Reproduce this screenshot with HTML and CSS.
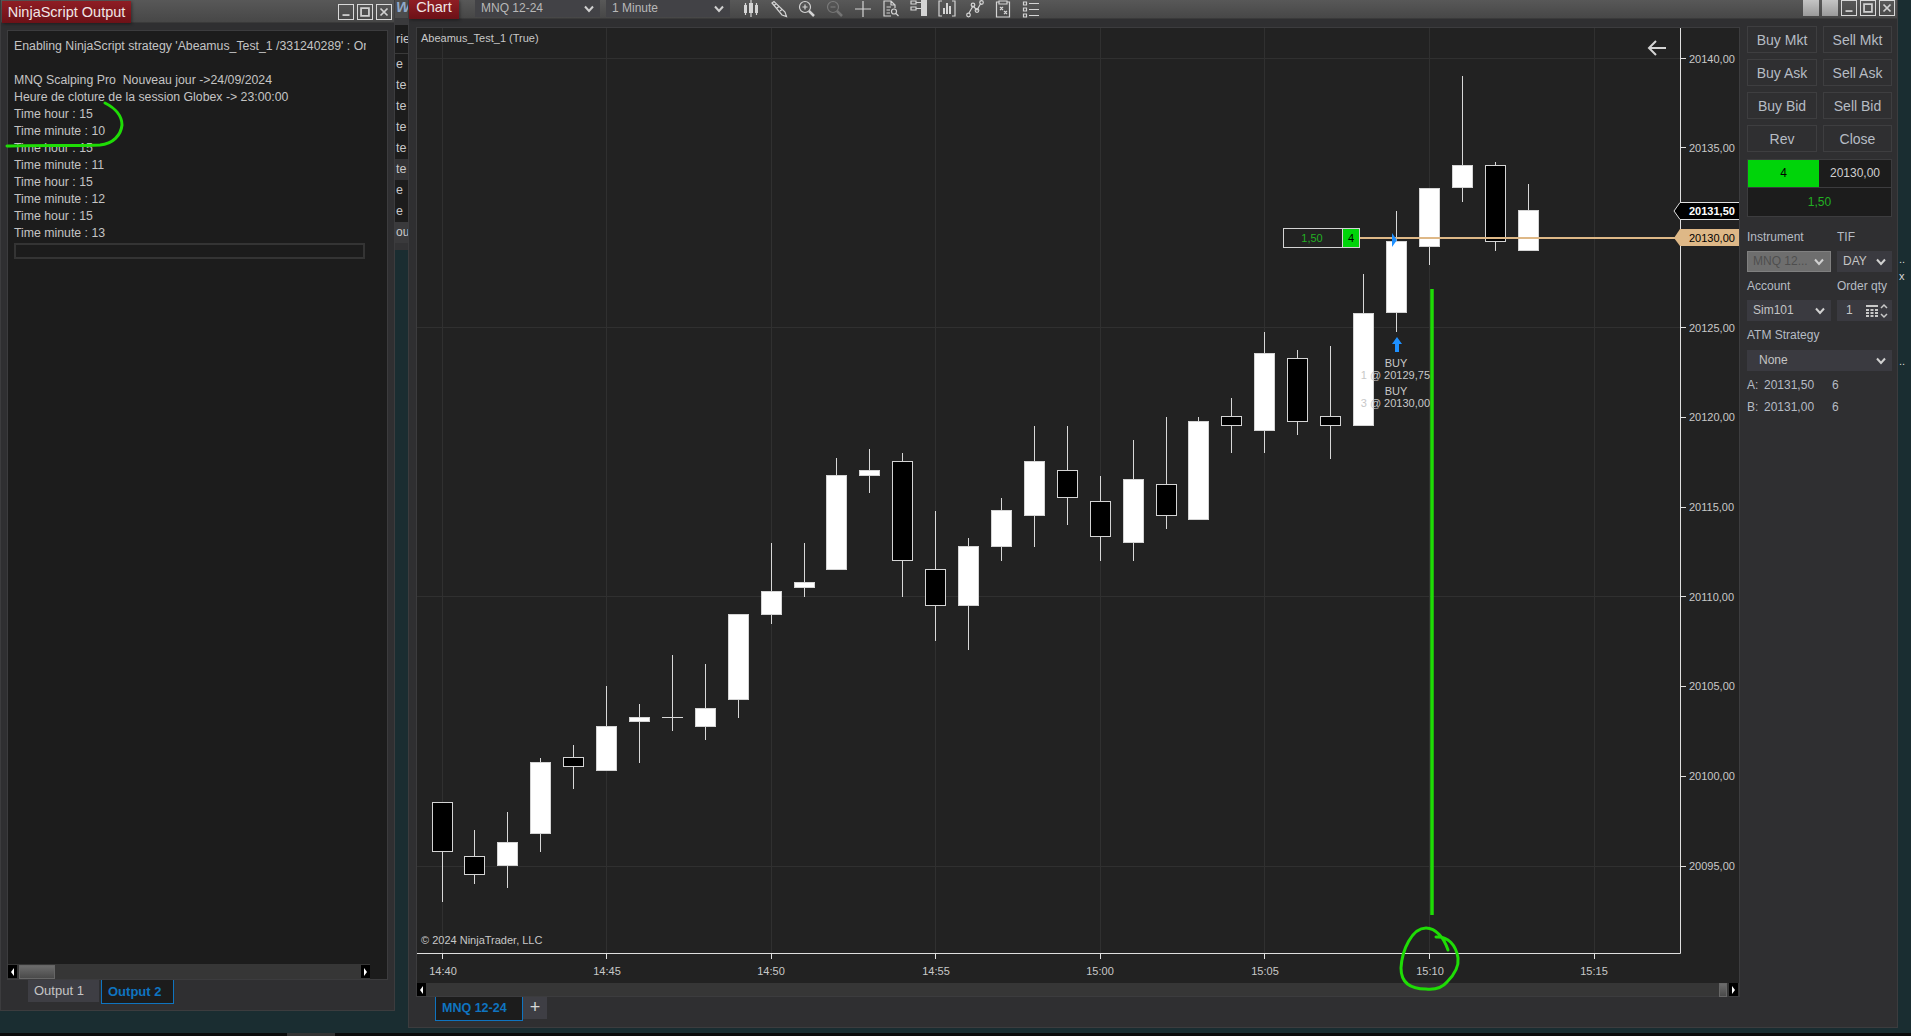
FILE: index.html
```html
<!DOCTYPE html>
<html lang="en">
<head>
    <meta charset="UTF-8">
    <title>NinjaTrader</title>
    <link rel="stylesheet" href="styles.css">
</head>
<body>
    <!-- Output window -->
    <section class="window output-window">
        <header class="titlebar">
            <div class="title-tab">NinjaScript Output</div>
            <div class="win-buttons">
                <span class="win-btn"><svg viewBox="0 0 16 16"><path d="M4 11.5H12" /></svg></span>
                <span class="win-btn"><svg viewBox="0 0 16 16"><path d="M3.5 3.5H12.5V12.5H3.5Z" /></svg></span>
                <span class="win-btn"><svg viewBox="0 0 16 16"><path d="M4 4L12 12M12 4L4 12" /></svg></span>
            </div>
        </header>
        <div class="output-body">
            <div class="output-panel">
                <div class="output-text">
                    <div class="line">Enabling NinjaScript strategy 'Abeamus_Test_1 /331240289' : On starting</div>
                    <div class="line">&nbsp;</div>
                    <div class="line">MNQ Scalping Pro&nbsp; Nouveau jour -&gt;24/09/2024</div>
                    <div class="line">Heure de cloture de la session Globex -&gt; 23:00:00</div>
                    <div class="line">Time hour : 15</div>
                    <div class="line">Time minute : 10</div>
                    <div class="line">Time hour : 15</div>
                    <div class="line">Time minute : 11</div>
                    <div class="line">Time hour : 15</div>
                    <div class="line">Time minute : 12</div>
                    <div class="line">Time hour : 15</div>
                    <div class="line">Time minute : 13</div>
                    <div class="output-input"></div>
                </div>
                <div class="scrollbar output-scroll">
                    <span class="scroll-arrow left"></span>
                    <span class="scroll-thumb wide"></span>
                    <span class="scroll-arrow right"></span>
                </div>
            </div>
            <div class="tabs output-tabs">
                <div class="tab">Output 1</div>
                <div class="tab active">Output 2</div>
            </div>
        </div>
    </section>

    <!-- Window behind, only a strip shows -->
    <section class="window behind-window">
        <div class="behind-title">W</div>
        <div class="behind-row head">rie</div>
        <div class="behind-row">e</div>
        <div class="behind-row">te</div>
        <div class="behind-row">te</div>
        <div class="behind-row">te</div>
        <div class="behind-row">te</div>
        <div class="behind-row selected">te</div>
        <div class="behind-row">e</div>
        <div class="behind-row">e</div>
        <div class="behind-row foot">ou</div>
    </section>

    <!-- Chart window -->
    <section class="window chart-window">
        <header class="titlebar chart-titlebar">
            <div class="title-tab chart-tab">Chart</div>
            <div class="tool-select first">MNQ 12-24<svg class="chevron" viewBox="0 0 10 8"><path d="M1 1.5L5 6L9 1.5" /></svg></div>
            <div class="tool-select second">1 Minute<svg class="chevron" viewBox="0 0 10 8"><path d="M1 1.5L5 6L9 1.5" /></svg></div>
            <div class="tool-icons">
                <svg viewBox="0 0 18 18"><path class="solid" d="M2 5H5V13H2ZM7 3H11V13H7ZM13 5H16V13H13Z" /><path d="M3.5 3V15M9 0V17M14.5 3V15" /></svg>
                <svg viewBox="0 0 18 18"><path d="M2 3L4 1.5L15 12L16.5 16.5L12 15Z M4.5 5L6.5 3.5M7 8L9 6.5M10 11L12 9.5" /></svg>
                <svg viewBox="0 0 18 18"><circle cx="7" cy="7" r="5.5" /><path d="M4.5 7H9.5M7 4.5V9.5" /><path class="thick" d="M11 11L16 16" /></svg>
                <svg class="dim" viewBox="0 0 18 18"><circle cx="7" cy="7" r="5.5" /><path d="M4.5 7H9.5" /><path class="thick" d="M11 11L16 16" /></svg>
                <svg viewBox="0 0 18 18"><path d="M9 1V17M1 9H17" /></svg>
                <svg viewBox="0 0 18 18"><path d="M9 16H2V1H9L13 5V8M9 1V5H13M4.5 7H9M4.5 10H8M4.5 13H8" /><circle cx="12" cy="11.5" r="2.5" /><path d="M14 13.5L16.5 16" /></svg>
                <svg viewBox="0 0 18 18"><path d="M1 1H6V4H1ZM1 7H6V10H1Z" /><path d="M6 2.5H11M6 8.5H11" /><path class="solid" d="M11 0H17V16H11Z" /></svg>
                <svg viewBox="0 0 18 18"><path d="M4 1H1V16H4M14 1H17V16H14" /><path class="solid" d="M5 8H7V14H5ZM8 3H10V14H8ZM11 6H13V14H11Z" /></svg>
                <svg viewBox="0 0 18 18"><path d="M3 13L7 6L11 10L15 3" /><circle cx="2.5" cy="15" r="1.8" /><circle cx="7" cy="5" r="1.8" /><circle cx="11" cy="10.5" r="1.8" /><circle cx="15.5" cy="2.5" r="1.8" /></svg>
                <svg viewBox="0 0 18 18"><path d="M5 2H2.5V17H15.5V2H13M5 1H13V4H5ZM6 7L9 10M9 7L6 10M10 11L13 14M13 11L10 14" /></svg>
                <svg viewBox="0 0 18 18"><path d="M1.5 2H4.5V5H1.5ZM1.5 8H4.5V11H1.5ZM1.5 14H4.5V17H1.5ZM7 3.5H17M7 9.5H17M7 15.5H17" /></svg>
            </div>
            <div class="win-buttons chart-buttons">
                <span class="win-btn plain"></span>
                <span class="win-btn plain"></span>
                <span class="win-btn"><svg viewBox="0 0 16 16"><path d="M4 11.5H12" /></svg></span>
                <span class="win-btn"><svg viewBox="0 0 16 16"><path d="M3.5 3.5H12.5V12.5H3.5Z" /></svg></span>
                <span class="win-btn"><svg viewBox="0 0 16 16"><path d="M4 4L12 12M12 4L4 12" /></svg></span>
            </div>
        </header>

        <div class="chart-body">
            <div class="chart-column">
                <div class="chart-panel">
                    <svg class="plot" viewBox="417 28 1322 955">
                        <!-- Сетка -->
                        <path class="grid" d="M442.5 27V953M606.5 27V953M771.5 27V953M935.5 27V953M1100.5 27V953M1264.5 27V953M1429.5 27V953M1594.5 27V953" />
                        <path class="grid" d="M416 58.5H1680M416 327.5H1680M416 596.5H1680M416 866.5H1680" />

                        <!-- Свечи -->
                        <path class="wick" d="M442.5 852V902" /><rect class="down" x="432.5" y="802.5" width="20" height="49" />
                        <path class="wick" d="M474.5 830V884" /><rect class="down" x="464.5" y="856.5" width="20" height="18" />
                        <path class="wick" d="M507.5 812V888" /><rect class="up" x="497.5" y="842.5" width="20" height="23" />
                        <path class="wick" d="M540.5 758V852" /><rect class="up" x="530.5" y="762.5" width="20" height="71" />
                        <path class="wick" d="M573.5 745V789" /><rect class="down" x="563.5" y="757.5" width="20" height="9" />
                        <path class="wick" d="M606.5 686V726" /><rect class="up" x="596.5" y="726.5" width="20" height="44" />
                        <path class="wick" d="M639.5 704V763" /><rect class="up" x="629.5" y="717.5" width="20" height="4" />
                        <path class="wick" d="M672.5 655V731M662 717.5H683" />
                        <path class="wick" d="M705.5 664V740" /><rect class="up" x="695.5" y="708.5" width="20" height="18" />
                        <rect class="up" x="728.5" y="614.5" width="20" height="85" /><path class="wick" d="M738.5 700V718" />
                        <path class="wick" d="M771.5 543V624" /><rect class="up" x="761.5" y="591.5" width="20" height="23" />
                        <path class="wick" d="M804.5 543V597" /><rect class="up" x="794.5" y="582.5" width="20" height="5" />
                        <path class="wick" d="M836.5 458V475" /><rect class="up" x="826.5" y="475.5" width="20" height="94" />
                        <path class="wick" d="M869.5 449V493" /><rect class="up" x="859.5" y="470.5" width="20" height="5" />
                        <path class="wick" d="M902.5 453V597" /><rect class="down" x="892.5" y="461.5" width="20" height="99" />
                        <path class="wick" d="M935.5 511V641" /><rect class="down" x="925.5" y="569.5" width="20" height="36" />
                        <path class="wick" d="M968.5 538V650" /><rect class="up" x="958.5" y="546.5" width="20" height="59" />
                        <path class="wick" d="M1001.5 498V561" /><rect class="up" x="991.5" y="510.5" width="20" height="36" />
                        <path class="wick" d="M1034.5 426V547" /><rect class="up" x="1024.5" y="461.5" width="20" height="54" />
                        <path class="wick" d="M1067.5 426V525" /><rect class="down" x="1057.5" y="470.5" width="20" height="27" />
                        <path class="wick" d="M1100.5 476V561" /><rect class="down" x="1090.5" y="501.5" width="20" height="35" />
                        <path class="wick" d="M1133.5 440V561" /><rect class="up" x="1123.5" y="479.5" width="20" height="63" />
                        <path class="wick" d="M1166.5 417V529" /><rect class="down" x="1156.5" y="484.5" width="20" height="31" />
                        <path class="wick" d="M1198.5 417V421" /><rect class="up" x="1188.5" y="421.5" width="20" height="98" />
                        <path class="wick" d="M1231.5 398V453" /><rect class="down" x="1221.5" y="416.5" width="20" height="9" />
                        <path class="wick" d="M1264.5 332V453" /><rect class="up" x="1254.5" y="353.5" width="20" height="77" />
                        <path class="wick" d="M1297.5 350V435" /><rect class="down" x="1287.5" y="358.5" width="20" height="63" />
                        <path class="wick" d="M1330.5 346V459" /><rect class="down" x="1320.5" y="416.5" width="20" height="9" />
                        <path class="wick" d="M1363.5 274V313" /><rect class="up" x="1353.5" y="313.5" width="20" height="112" />
                        <path class="wick" d="M1396.5 211V332" /><rect class="up" x="1386.5" y="241.5" width="20" height="71" />
                        <path class="wick" d="M1429.5 247V265" /><rect class="up" x="1419.5" y="188.5" width="20" height="58" />
                        <path class="wick" d="M1462.5 76V202" /><rect class="up" x="1452.5" y="165.5" width="20" height="22" />
                        <path class="wick" d="M1495.5 162V251" /><rect class="down" x="1485.5" y="165.5" width="20" height="76" />
                        <path class="wick" d="M1528.5 184V210" /><rect class="up" x="1518.5" y="210.5" width="20" height="40" />

                        <!-- Позиция -->
                        <path class="position-line" d="M1359 238H1676" />
                        <rect class="position-box" x="1283.5" y="228.5" width="76" height="19" />
                        <rect class="position-qty" x="1342.5" y="228.5" width="17" height="19" />
                        <text class="pnl-text" x="1312" y="242" text-anchor="middle">1,50</text>
                        <text class="qty-text" x="1351" y="242" text-anchor="middle">4</text>

                        <!-- Сделка -->
                        <path class="marker" d="M1392 233L1397 240L1392 247Z" />
                        <path class="marker" d="M1397 337L1402 344H1399V352H1395V344H1392Z" />
                        <text class="chart-label" x="1396" y="367" text-anchor="middle">BUY</text>
                        <text class="chart-label" x="1430" y="379" text-anchor="end">1 @ 20129,75</text>
                        <text class="chart-label" x="1396" y="395" text-anchor="middle">BUY</text>
                        <text class="chart-label" x="1430" y="407" text-anchor="end">3 @ 20130,00</text>

                        <path class="back-arrow" d="M1666 48H1649M1656 41L1649 48L1656 55" />
                        <text class="chart-label" x="421" y="42">Abeamus_Test_1 (True)</text>
                        <text class="chart-label" x="421" y="944">© 2024 NinjaTrader, LLC</text>

                        <!-- Оси -->
                        <path class="axis" d="M1680.5 27V953.5H416" />
                        <path class="axis" d="M1680 58.5H1686M1680 147.5H1686M1680 327.5H1686M1680 417.5H1686M1680 507.5H1686M1680 596.5H1686M1680 686.5H1686M1680 776.5H1686M1680 866.5H1686" />
                        <path class="axis" d="M442.5 953V959M606.5 953V959M771.5 953V959M935.5 953V959M1100.5 953V959M1264.5 953V959M1429.5 953V959M1594.5 953V959" />

                        <text class="chart-label" x="1689" y="63">20140,00</text>
                        <text class="chart-label" x="1689" y="152">20135,00</text>
                        <text class="chart-label" x="1689" y="332">20125,00</text>
                        <text class="chart-label" x="1689" y="421">20120,00</text>
                        <text class="chart-label" x="1689" y="511">20115,00</text>
                        <text class="chart-label" x="1689" y="601">20110,00</text>
                        <text class="chart-label" x="1689" y="690">20105,00</text>
                        <text class="chart-label" x="1689" y="780">20100,00</text>
                        <text class="chart-label" x="1689" y="870">20095,00</text>

                        <text class="chart-label" x="443" y="975" text-anchor="middle">14:40</text>
                        <text class="chart-label" x="607" y="975" text-anchor="middle">14:45</text>
                        <text class="chart-label" x="771" y="975" text-anchor="middle">14:50</text>
                        <text class="chart-label" x="936" y="975" text-anchor="middle">14:55</text>
                        <text class="chart-label" x="1100" y="975" text-anchor="middle">15:00</text>
                        <text class="chart-label" x="1265" y="975" text-anchor="middle">15:05</text>
                        <text class="chart-label" x="1430" y="975" text-anchor="middle">15:10</text>
                        <text class="chart-label" x="1594" y="975" text-anchor="middle">15:15</text>

                        <path class="last-price" d="M1674 211L1680 202.5H1740V219.5H1680Z" />
                        <text class="last-text" x="1689" y="215">20131,50</text>
                        <path class="avg-price" d="M1674 238L1680 229H1740V246H1680Z" />
                        <text class="avg-text" x="1689" y="242">20130,00</text>
                    </svg>
                    <div class="scrollbar chart-scroll">
                        <span class="scroll-arrow left"></span>
                        <span class="scroll-thumb narrow"></span>
                        <span class="scroll-arrow right"></span>
                    </div>
                </div>
                <div class="tabs chart-tabs">
                    <div class="tab active">MNQ 12-24</div>
                    <div class="tab add">+</div>
                </div>
            </div>

            <!-- Панель заявок -->
            <aside class="order-panel">
                <div class="order-buttons">
                    <button class="order-btn">Buy Mkt</button>
                    <button class="order-btn">Sell Mkt</button>
                    <button class="order-btn">Buy Ask</button>
                    <button class="order-btn">Sell Ask</button>
                    <button class="order-btn">Buy Bid</button>
                    <button class="order-btn">Sell Bid</button>
                    <button class="order-btn">Rev</button>
                    <button class="order-btn">Close</button>
                </div>
                <div class="position-card">
                    <div class="position-top">
                        <div class="position-size">4</div>
                        <div class="position-price">20130,00</div>
                    </div>
                    <div class="position-pnl">1,50</div>
                </div>
                <div class="order-form">
                    <div class="field-label">Instrument</div>
                    <div class="field-label">TIF</div>
                    <div class="field disabled">MNQ 12...<svg class="chevron" viewBox="0 0 10 8"><path d="M1 1.5L5 6L9 1.5" /></svg></div>
                    <div class="field">DAY<svg class="chevron" viewBox="0 0 10 8"><path d="M1 1.5L5 6L9 1.5" /></svg></div>
                    <div class="field-label">Account</div>
                    <div class="field-label">Order qty</div>
                    <div class="field">Sim101<svg class="chevron" viewBox="0 0 10 8"><path d="M1 1.5L5 6L9 1.5" /></svg></div>
                    <div class="field qty">
                        <span>1</span>
                        <svg class="calc" viewBox="0 0 12 12"><path d="M0 0H12V2H0ZM0 4H3V6H0ZM4.5 4H7.5V6H4.5ZM9 4H12V6H9ZM0 7H3V9H0ZM4.5 7H7.5V9H4.5ZM9 7H12V9H9ZM0 10H3V12H0ZM4.5 10H7.5V12H4.5ZM9 10H12V12H9Z" /></svg>
                        <svg class="spin" viewBox="0 0 8 16"><path d="M1 5L4 2L7 5M1 11L4 14L7 11" /></svg>
                    </div>
                    <div class="field-label wide">ATM Strategy</div>
                    <div class="field wide none">None<svg class="chevron" viewBox="0 0 10 8"><path d="M1 1.5L5 6L9 1.5" /></svg></div>
                </div>
                <div class="quote"><span class="quote-side">A:</span><span class="quote-price">20131,50</span><span>6</span></div>
                <div class="quote"><span class="quote-side">B:</span><span class="quote-price">20131,00</span><span>6</span></div>
            </aside>
        </div>
    </section>

    <div class="edge-marks">
        <span class="mark-a">..</span>
        <span class="mark-b">x</span>
        <span class="mark-c">..</span>
    </div>

    <div class="taskbar"><span class="task-item"></span></div>

    <!-- Зелёные пометки поверх окна -->
    <svg class="annotations" viewBox="0 0 1911 1036">
        <path d="M105 103C115 108 122 116 122 125C121 135 113 144 100 145C80 146 30 145 7 146" />
        <path class="long-line" d="M1432 289V915" />
        <path d="M1448 950C1444 938 1436 928 1426 928C1412 928 1402 950 1401 968C1401 982 1410 989 1426 989C1436 990 1442 988 1447 982C1455 974 1459 966 1458 958C1456 945 1448 936 1436 937" />
    </svg>
</body>
</html>
```

FILE: styles.css
```css
* {
    box-sizing: border-box;
}

html,
body {
    height: 100%;
}

body {
    margin: 0;
    position: relative;
    overflow: hidden;
    background: #1a2d31;
    font-family: "Liberation Sans", Arial, sans-serif;
    font-size: 12px;
    color: #c4c4c4;
}

/* Окна на рабочем столе */
.window {
    position: absolute;
    top: 0;
    background: #2f2f31;
}

.output-window {
    left: 0;
    width: 395px;
    height: 1011px;
    border: 1px solid #3c3c3e;
    border-top: 0;
}

.behind-window {
    left: 395px;
    width: 13px;
    height: 250px;
    background: #333335;
    overflow: hidden;
    color: #c8c8c8;
    font-size: 12.5px;
}

.chart-window {
    left: 408px;
    width: 1490px;
    height: 1028px;
    border: 1px solid #3c3c3e;
    border-top: 0;
}

/* Заголовки */
.titlebar {
    display: flex;
    align-items: flex-start;
    height: 23px;
    background: linear-gradient(to bottom, #585858, #474747);
    border-bottom: 1px solid #3a3a3a;
}

.title-tab {
    margin: 1px 0 0 1px;
    width: 129px;
    height: 22px;
    line-height: 22px;
    text-align: center;
    font-size: 14.5px;
    color: #f0e6e6;
    background: linear-gradient(to bottom, #8f1d24, #6d1117);
    box-shadow: 1px 1px 3px rgba(0, 0, 0, 0.4);
}

.win-buttons {
    display: flex;
    gap: 3px;
    margin: 4px 2px 0 auto;
}

.win-btn {
    width: 16px;
    height: 16px;
    border: 1px solid #d8d8d8;
}

.win-btn svg {
    display: block;
    width: 14px;
    height: 14px;
    fill: none;
    stroke: #d0d0d0;
    stroke-width: 2;
}

.win-btn.plain {
    border: 0;
    background: linear-gradient(to bottom, #c4c4c4, #9a9a9a);
}

.chart-titlebar {
    height: 19px;
    align-items: flex-start;
}

.chart-tab {
    margin: 0 16px 0 0;
    width: 50px;
    height: 19px;
    line-height: 15px;
}

.tool-select {
    position: relative;
    height: 17px;
    line-height: 16px;
    padding-left: 6px;
    font-size: 12px;
    color: #b8b8b8;
    background: #424246;
}

.tool-select.first {
    width: 125px;
    margin-right: 6px;
}

.tool-select.second {
    width: 124px;
    margin-right: 12px;
}

.chevron {
    position: absolute;
    right: 6px;
    top: 50%;
    width: 10px;
    height: 8px;
    margin-top: -4px;
    fill: none;
    stroke: #d0d0d0;
    stroke-width: 2;
}

.tool-icons {
    display: flex;
    gap: 10px;
}

.tool-icons svg {
    width: 18px;
    height: 18px;
    fill: none;
    stroke: #d4d4d4;
    stroke-width: 1.2;
}

.tool-icons .solid {
    fill: #d4d4d4;
    stroke: none;
}

.tool-icons .thick {
    stroke-width: 2.5;
}

.tool-icons .dim {
    opacity: 0.3;
}

.chart-buttons {
    margin: 0 2px 0 auto;
}

/* NinjaScript Output */
.output-body {
    padding: 7px 6px 0;
}

.output-panel {
    height: 950px;
    display: flex;
    flex-direction: column;
    background: #1c1c1c;
    border: 1px solid #3c3c3e;
}

.output-text {
    flex: 1;
    padding: 7px 0 0 6px;
    width: 358px;
    overflow: hidden;
    white-space: nowrap;
}

.line {
    height: 17px;
    line-height: 17px;
    font-size: 12.3px;
}

.output-input {
    width: 351px;
    height: 16px;
    margin-top: 1px;
    border: 2px solid #343434;
}

.scrollbar {
    display: flex;
    align-items: center;
    height: 15px;
    background: #363636;
}

.output-scroll {
    width: 362px;
}

.scroll-arrow {
    position: relative;
    width: 9px;
    height: 13px;
    background: #000;
}

.scroll-arrow::after {
    content: "";
    position: absolute;
    top: 3px;
    left: 3px;
    border: 4px solid transparent;
    border-left: 0;
    border-right: 3px solid #fff;
}

.scroll-arrow.right {
    margin-left: auto;
}

.scroll-arrow.right::after {
    border-right: 0;
    border-left: 3px solid #fff;
}

.scroll-thumb {
    height: 14px;
    background: linear-gradient(to bottom, #6c6c6c, #4a4a4a);
    border: 1px solid #666;
}

.scroll-thumb.wide {
    width: 36px;
    margin-left: 2px;
}

.scroll-thumb.narrow {
    width: 8px;
    margin-left: auto;
    margin-right: 2px;
}

.scroll-thumb.narrow + .scroll-arrow.right {
    margin-left: 0;
}

.tabs {
    display: flex;
}

.tab {
    height: 22px;
    line-height: 22px;
    padding: 0 14px;
    font-size: 13px;
    white-space: nowrap;
    background: #3e3e44;
}

.tab.active {
    height: 24px;
    color: #0f74c0;
    background: #1c1c1c;
    border: 1px solid #0f74c0;
    border-top: 0;
    line-height: 23px;
    font-weight: bold;
}

.output-tabs {
    margin-left: 21px;
    gap: 2px;
}

.output-tabs .tab {
    width: 71px;
    padding: 0 0 0 6px;
}

.output-tabs .tab.active {
    width: 73px;
    padding: 0 0 0 6px;
}

/* Полоска соседнего окна */
.behind-title {
    height: 25px;
    line-height: 14px;
    padding-left: 1px;
    font-size: 15px;
    font-weight: bold;
    font-style: italic;
    color: #8fa8c8;
    background: linear-gradient(to bottom, #4c4c4c 18px, #3a3a3c 18px);
}

.behind-row {
    height: 21px;
    line-height: 21px;
    padding-left: 1px;
    background: #1c1c1c;
    white-space: nowrap;
}

.behind-row.head {
    height: 29px;
    line-height: 28px;
    border-bottom: 1px solid #3a3a3a;
}

.behind-row.selected {
    background: #333335;
}

.behind-row.foot {
    background: #3a3a3c;
    font-size: 12px;
}

/* Окно графика */
.chart-body {
    display: flex;
    padding: 8px 0 0 7px;
}

.chart-column {
    width: 1324px;
}

.chart-panel {
    height: 970px;
    background: #222222;
    border: 1px solid #3c3c3e;
    display: flex;
    flex-direction: column;
}

.plot {
    display: block;
    width: 1322px;
    height: 955px;
    flex: none;
}

.chart-scroll {
    height: 13px;
    padding-right: 1px;
}

.chart-tabs {
    margin-left: 19px;
    align-items: flex-start;
}

.chart-tabs .tab.active {
    width: 88px;
    padding: 0 0 0 6px;
    font-size: 12.5px;
}

.tab.add {
    width: 24px;
    height: 22px;
    padding: 0;
    text-align: center;
    font-size: 18px;
    line-height: 21px;
    color: #d8d8d8;
    background: #3e3e44;
}

/* SVG: свечи и подписи */
.grid {
    fill: none;
    stroke: #303030;
    stroke-width: 1;
}

.wick {
    fill: none;
    stroke: #d8d8d8;
    stroke-width: 1;
}

.up {
    fill: #fff;
    stroke: #d4d4d4;
    stroke-width: 1;
}

.down {
    fill: #000;
    stroke: #d4d4d4;
    stroke-width: 1;
}

.axis {
    fill: none;
    stroke: #e0e0e0;
    stroke-width: 1;
}

.chart-label {
    font-size: 11px;
    fill: #c8c8c8;
}

.back-arrow {
    fill: none;
    stroke: #d4d4d4;
    stroke-width: 2;
}

.position-line {
    fill: none;
    stroke: #deb887;
    stroke-width: 2;
}

.position-box {
    fill: #222;
    stroke: #d4d4d4;
}

.position-qty {
    fill: #00d40a;
    stroke: #d4d4d4;
}

.pnl-text {
    font-size: 11px;
    fill: #22b022;
}

.qty-text {
    font-size: 11px;
    fill: #000;
}

.marker {
    fill: #1e90ff;
}

.last-price {
    fill: #000;
    stroke: #e0e0e0;
}

.last-text {
    font-size: 11px;
    font-weight: bold;
    fill: #fff;
}

.avg-price {
    fill: #deb887;
}

.avg-text {
    font-size: 11px;
    fill: #000;
}

/* Панель заявок */
.order-panel {
    width: 145px;
    margin-left: 7px;
    margin-top: -1px;
}

.order-buttons {
    display: grid;
    grid-template-columns: 70px 69px;
    grid-auto-rows: 27px;
    column-gap: 6px;
    row-gap: 6px;
}

.order-btn {
    padding: 0;
    font-family: inherit;
    font-size: 14px;
    color: #b6bcc4;
    background: #2f2f31;
    border: 1px solid #3e3e40;
}

.position-card {
    margin-top: 7px;
    border: 1px solid #3c3c3e;
    background: #1c1c1c;
}

.position-top {
    display: flex;
    height: 28px;
    border-bottom: 1px solid #3c3c3e;
}

.position-size {
    width: 71px;
    line-height: 27px;
    text-align: center;
    color: #000;
    background: #00d40a;
}

.position-price {
    flex: 1;
    line-height: 27px;
    text-align: center;
    color: #d0d0d0;
}

.position-pnl {
    height: 28px;
    line-height: 28px;
    text-align: center;
    color: #22b022;
}

.order-form {
    display: grid;
    grid-template-columns: 84px 55px;
    column-gap: 6px;
    margin-top: 13px;
}

.field-label {
    height: 21px;
    line-height: 15px;
    color: #b6bcc4;
}

.field-label.wide {
    height: 22px;
}

.field-label.wide,
.field.wide {
    grid-column: 1 / 3;
}

.field {
    position: relative;
    height: 21px;
    line-height: 21px;
    padding-left: 6px;
    margin-bottom: 7px;
    background: #3a3a40;
    color: #c4c4c4;
}

.field.disabled {
    background: #6e6e6e;
    color: #4e4e4e;
    border: 1px solid #808080;
    line-height: 19px;
    padding-left: 5px;
}

.field.none {
    padding-left: 12px;
    margin-bottom: 3px;
}

.field.qty {
    display: flex;
    align-items: center;
    padding-left: 9px;
}

.calc {
    width: 12px;
    height: 12px;
    margin-left: 13px;
    fill: #c8c8c8;
}

.spin {
    width: 8px;
    height: 16px;
    margin-left: 2px;
    fill: none;
    stroke: #c8c8c8;
    stroke-width: 1.5;
}

.quote {
    display: flex;
    height: 22px;
    line-height: 22px;
    color: #b6bcc4;
}

.quote-side {
    width: 17px;
}

.quote-price {
    width: 68px;
}

/* Край экрана */
.edge-marks {
    color: #d8d8d8;
    font-size: 11px;
}

.edge-marks span {
    position: absolute;
    left: 1899px;
}

.mark-a {
    top: 253px;
}

.mark-b {
    top: 270px;
}

.mark-c {
    top: 355px;
}

.taskbar {
    position: absolute;
    left: 0;
    right: 0;
    top: 1033px;
    height: 3px;
    background: #0b0b0b;
}

.task-item {
    display: block;
    margin-left: 287px;
    width: 48px;
    height: 3px;
    background: #333;
}

/* Пометки */
.annotations {
    position: absolute;
    left: 0;
    top: 0;
    width: 1911px;
    height: 1036px;
    pointer-events: none;
    fill: none;
    stroke: #1fdc06;
    stroke-width: 3;
    stroke-linecap: round;
}

.long-line {
    stroke-width: 3.5;
    stroke-linecap: butt;
}
```
